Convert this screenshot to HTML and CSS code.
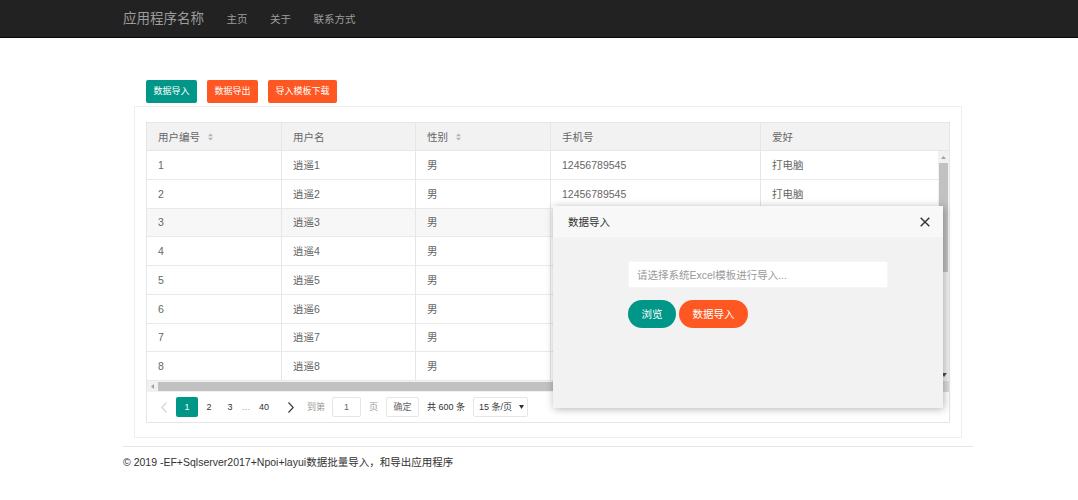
FILE: index.html
```html
<!DOCTYPE html>
<html lang="zh-CN">
<head>
<meta charset="utf-8">
<title>数据导入</title>
<link rel="stylesheet" href="styles.css">
</head>
<body>
<header class="navbar">
  <div class="nav-inner">
    <span class="brand">应用程序名称</span>
    <a class="nav-link" href="#">主页</a>
    <a class="nav-link" href="#">关于</a>
    <a class="nav-link" href="#">联系方式</a>
  </div>
</header>

<main class="container">
  <section class="panel">
    <div class="toolbar">
      <span class="btn-sm teal">数据导入</span>
      <span class="btn-sm orange">数据导出</span>
      <span class="btn-sm orange">导入模板下载</span>
    </div>
    <div class="panel-box">
      <div class="table-view">
        <div class="thead">
          <div class="th c1">用户编号<svg class="sort" width="5" height="8" viewBox="0 0 5 8"><path d="M0 3.3L2.5 0.5L5 3.3Z M0 4.7L2.5 7.5L5 4.7Z" fill="#b2b2b2"/></svg></div>
          <div class="th c2">用户名</div>
          <div class="th c3">性别<svg class="sort" width="5" height="8" viewBox="0 0 5 8"><path d="M0 3.3L2.5 0.5L5 3.3Z M0 4.7L2.5 7.5L5 4.7Z" fill="#b2b2b2"/></svg></div>
          <div class="th c4">手机号</div>
          <div class="th c5 last">爱好</div>
        </div>
        <div class="tbody">
          <div class="rows">
            <div class="tr"><div class="td c1">1</div><div class="td c2">逍遥1</div><div class="td c3">男</div><div class="td c4">12456789545</div><div class="td c5">打电脑</div></div>
            <div class="tr"><div class="td c1">2</div><div class="td c2">逍遥2</div><div class="td c3">男</div><div class="td c4">12456789545</div><div class="td c5">打电脑</div></div>
            <div class="tr hover"><div class="td c1">3</div><div class="td c2">逍遥3</div><div class="td c3">男</div><div class="td c4">12456789545</div><div class="td c5">打电脑</div></div>
            <div class="tr"><div class="td c1">4</div><div class="td c2">逍遥4</div><div class="td c3">男</div><div class="td c4">12456789545</div><div class="td c5">打电脑</div></div>
            <div class="tr"><div class="td c1">5</div><div class="td c2">逍遥5</div><div class="td c3">男</div><div class="td c4">12456789545</div><div class="td c5">打电脑</div></div>
            <div class="tr"><div class="td c1">6</div><div class="td c2">逍遥6</div><div class="td c3">男</div><div class="td c4">12456789545</div><div class="td c5">打电脑</div></div>
            <div class="tr"><div class="td c1">7</div><div class="td c2">逍遥7</div><div class="td c3">男</div><div class="td c4">12456789545</div><div class="td c5">打电脑</div></div>
            <div class="tr"><div class="td c1">8</div><div class="td c2">逍遥8</div><div class="td c3">男</div><div class="td c4">12456789545</div><div class="td c5">打电脑</div></div>
          </div>
          <div class="vscroll">
            <div class="arrow-box"><svg width="5" height="3" viewBox="0 0 5 3"><path d="M0 3L2.5 0L5 3Z" fill="#a3a3a3"/></svg></div>
            <div class="vthumb"></div>
            <div class="vspace"></div>
            <div class="arrow-box"><svg width="6" height="4" viewBox="0 0 6 4"><path d="M0 0L3 4L6 0Z" fill="#505050"/></svg></div>
          </div>
        </div>
        <div class="hscroll">
          <div class="harrow"><svg width="3" height="5" viewBox="0 0 3 5"><path d="M3 0L0 2.5L3 5Z" fill="#a3a3a3"/></svg></div>
          <div class="hthumb"></div>
          <div class="harrow"></div>
          <div class="corner"></div>
        </div>
        <div class="pager">
          <span class="pg prev"><svg width="6" height="11" viewBox="0 0 6 11"><path d="M5.5 0.5L0.8 5.5L5.5 10.5" fill="none" stroke="#d2d2d2" stroke-width="1.1"/></svg></span>
          <span class="pg cur">1</span>
          <span class="pg w22">2</span>
          <span class="pg w20">3</span>
          <span class="pg dots">…</span>
          <span class="pg w24">40</span>
          <span class="pg next"><svg width="6" height="11" viewBox="0 0 6 11"><path d="M0.5 0.5L5.2 5.5L0.5 10.5" fill="none" stroke="#333" stroke-width="1.1"/></svg></span>
          <span class="skip-label">到第</span>
          <span class="skip-input">1</span>
          <span class="skip-page">页</span>
          <span class="skip-btn">确定</span>
          <span class="count">共 600 条</span>
          <span class="limit">15 条/页<svg width="5" height="4" viewBox="0 0 5 4"><path d="M0 0L2.5 4L5 0Z" fill="#333"/></svg></span>
        </div>
      </div>
    </div>
  </section>
  <hr class="rule">
  <footer class="footer">© 2019 -EF+Sqlserver2017+Npoi+layui数据批量导入，和导出应用程序</footer>
</main>

<div class="modal">
  <div class="modal-head">
    <span>数据导入</span>
    <svg width="10" height="10" viewBox="0 0 10 10"><path d="M0.7 0.7L9.3 9.3M9.3 0.7L0.7 9.3" stroke="#333" stroke-width="1.4"/></svg>
  </div>
  <div class="modal-body">
    <div class="file-input">请选择系统Excel模板进行导入...</div>
    <div class="modal-btns">
      <span class="btn-round teal">浏览</span>
      <span class="btn-round orange">数据导入</span>
    </div>
  </div>
</div>
</body>
</html>
```

FILE: styles.css
```css
* { box-sizing: border-box; }

body {
  margin: 0;
  background: #fff;
  color: #333;
  font-family: "Liberation Sans", "Noto Sans CJK SC", sans-serif;
}

.navbar {
  height: 38px;
  background: #222;
  border-bottom: 1px solid #080808;
}
.nav-inner {
  margin-left: 123px;
  height: 100%;
  display: flex;
  align-items: center;
}
.brand {
  font-size: 13.5px;
  line-height: 20px;
  color: #9d9d9d;
}
.nav-link {
  margin-left: 22.5px;
  font-size: 10.5px;
  line-height: 16px;
  color: #9d9d9d;
  text-decoration: none;
}

.container {
  margin-left: 123px;
  width: 850px;
  padding-top: 42px;
}
.panel { margin: 0 11px; }

.toolbar {
  display: flex;
  gap: 10px;
  padding-left: 12px;
  margin-bottom: 3.5px;
}
.btn-sm {
  height: 22.5px;
  padding: 0 7.5px;
  display: flex;
  align-items: center;
  font-size: 9px;
  line-height: 1;
  color: #fff;
  border-radius: 2px;
}
.teal { background: #009688; }
.orange { background: #ff5722; }

.panel-box {
  border: 1px solid #f0f0f0;
  padding: 15px 11px 14px;
}

.table-view { border: 1px solid #e6e6e6; }

.thead {
  display: flex;
  height: 28px;
  background: #f2f2f2;
  border-bottom: 1px solid #e6e6e6;
}
.th, .td {
  flex: none;
  display: flex;
  align-items: center;
  padding: 0 11px;
  border-right: 1px solid #e6e6e6;
  font-size: 10.5px;
  line-height: 14px;
  color: #666;
  white-space: nowrap;
}
.c1 { width: 135px; }
.c2 { width: 134px; }
.c3 { width: 135px; }
.c4 { width: 210px; }
.c5 { width: 190px; }
.th.last { flex: 1; border-right: none; }
.sort { margin-left: 8px; }

.tbody {
  display: flex;
  height: 230px;
}
.rows {
  flex: 1;
  overflow: hidden;
}
.tr {
  display: flex;
  height: 28.75px;
  border-bottom: 1px solid #e9e9e9;
}
.tr.hover { background: #f7f7f7; }

.vscroll {
  width: 11px;
  background: #f1f1f1;
  display: flex;
  flex-direction: column;
}
.arrow-box {
  height: 12px;
  display: flex;
  align-items: center;
  justify-content: center;
}
.vthumb {
  height: 109px;
  margin: 0 1px;
  background: #c1c1c1;
}
.vspace { flex: 1; }

.hscroll {
  display: flex;
  height: 11px;
  background: #f1f1f1;
}
.harrow {
  width: 11px;
  display: flex;
  align-items: center;
  justify-content: center;
}
.hthumb {
  flex: 1;
  margin: 1px 0;
  background: #c1c1c1;
}
.corner {
  width: 11px;
  background: #dcdcdc;
}

.pager {
  height: 30px;
  display: flex;
  align-items: center;
  padding-left: 4px;
  font-size: 9px;
  line-height: 12px;
  color: #333;
}
.pg {
  height: 20px;
  display: flex;
  align-items: center;
  justify-content: center;
}
.prev { width: 25px; }
.cur { width: 22px; background: #009688; color: #fff; border-radius: 2px; }
.w22 { width: 22px; }
.w20 { width: 20px; }
.w24 { width: 24px; }
.dots { width: 12px; color: #999; }
.next { width: 30px; }
.skip-label { margin-left: 1px; color: #999; }
.skip-input, .skip-btn, .limit {
  height: 20px;
  display: flex;
  align-items: center;
  border: 1px solid #e6e6e6;
  border-radius: 2px;
}
.skip-input {
  margin-left: 7px;
  width: 29px;
  justify-content: center;
  color: #666;
}
.skip-page { margin-left: 8px; color: #999; }
.skip-btn {
  margin-left: 8px;
  width: 33px;
  justify-content: center;
  color: #666;
}
.count { margin-left: 8px; }
.limit {
  margin-left: 8px;
  width: 55px;
  padding-left: 5px;
  gap: 7px;
}

.rule {
  margin: 8px 0 0;
  border: 0;
  border-top: 1px solid #e5e5e5;
}
.footer {
  margin-top: 8px;
  font-size: 10.5px;
  line-height: 15px;
  color: #333;
}

.modal {
  position: absolute;
  left: 553px;
  top: 206px;
  width: 390px;
  height: 202px;
  background: #f2f2f2;
  box-shadow: 1px 1px 8px rgba(0, 0, 0, 0.3);
}
.modal-head {
  height: 31px;
  background: #f8f8f8;
  display: flex;
  align-items: center;
  justify-content: space-between;
  padding: 0 13px 0 15px;
  font-size: 10.5px;
  line-height: 14px;
  color: #333;
}
.modal-body { padding: 24px 0 0 75px; }
.file-input {
  width: 260px;
  height: 27px;
  display: flex;
  align-items: center;
  padding-left: 8px;
  background: #fff;
  border: 1px solid #f6f6f6;
  font-size: 10.5px;
  line-height: 14px;
  color: #999;
}
.modal-btns {
  display: flex;
  gap: 3px;
  margin-top: 12px;
}
.btn-round {
  height: 28px;
  padding: 0 13.5px;
  display: flex;
  align-items: center;
  border-radius: 14px;
  font-size: 10.5px;
  line-height: 14px;
  color: #fff;
}
```
